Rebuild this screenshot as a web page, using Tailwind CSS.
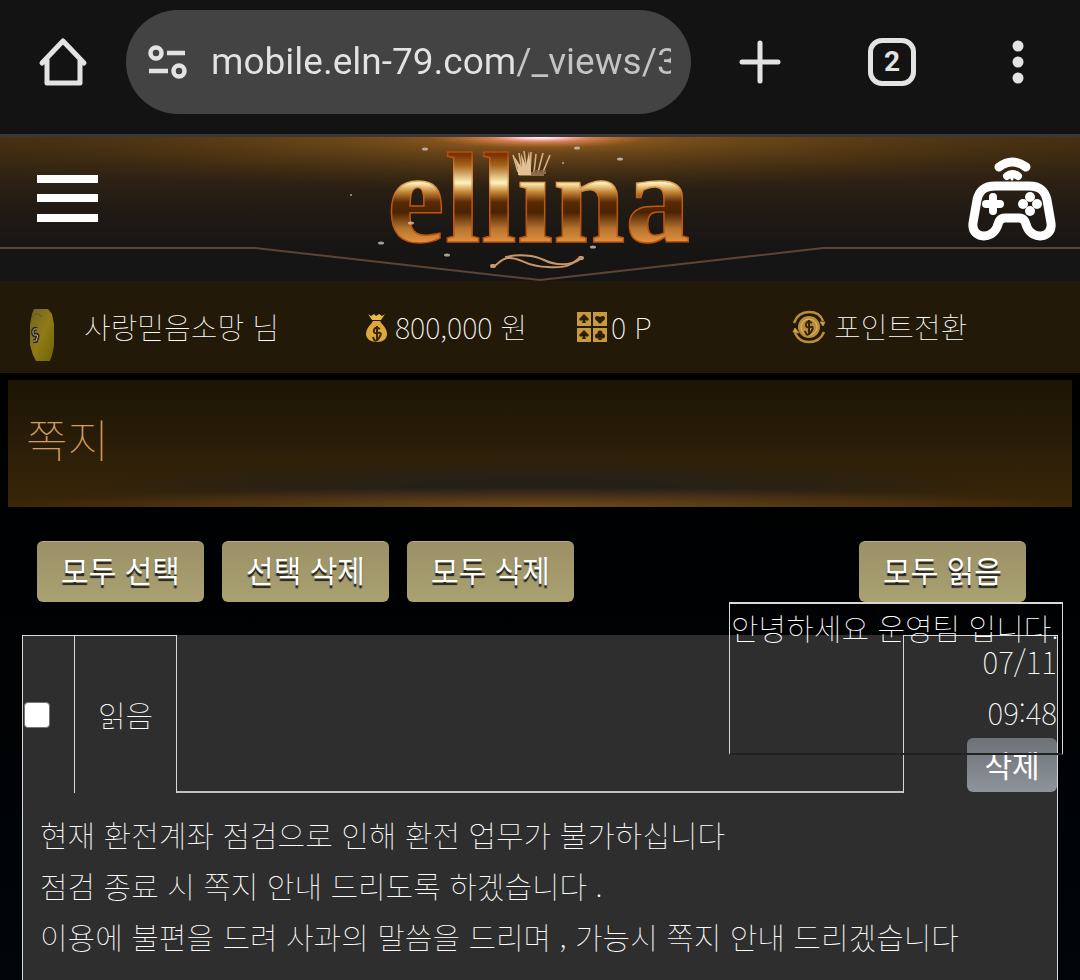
<!DOCTYPE html>
<html lang="ko">
<head>
<meta charset="utf-8">
<meta name="viewport" content="width=device-width, initial-scale=1">
<title>쪽지 - ellina</title>
<script src="https://cdn.jsdelivr.net/npm/@tailwindcss/browser@4"></script>
</head>
<body class="bg-black">
<div class="flex h-screen flex-col overflow-hidden bg-linear-to-b from-black to-[#00060a] font-['Noto_Sans_CJK_KR',sans-serif] font-thin text-white">

  <!-- Browser toolbar -->
  <div class="flex shrink-0 items-center border-b-3 border-[#38383b] bg-[#131313] pt-2.5 pb-5 pl-[38px] text-[#e3e3e3]">
    <button type="button" aria-label="홈" class="shrink-0">
      <svg class="h-[50px] w-[50px]" viewBox="0 0 50 50" fill="none" stroke="currentColor" stroke-width="5" stroke-linecap="round" stroke-linejoin="round"><path d="M4 26 25 4l21 22M9 23v23h33V23"/></svg>
    </button>
    <label class="ml-[38px] flex h-[104px] min-w-0 flex-1 items-center rounded-full bg-[#434343] pr-5 pl-[21px]">
      <svg class="h-9 w-10 shrink-0" viewBox="0 0 40 36" fill="none" stroke="currentColor" stroke-width="4.5"><circle cx="9" cy="9" r="5.500"/><path d="M20 9h18M2 27h19"/><circle cx="32" cy="27" r="5.500"/></svg>
      <input aria-label="주소" value="mobile.eln-79.com/_views/3" class="ml-6 w-full min-w-0 bg-linear-to-r from-[#e3e3e3] from-66% to-[#c4c4c4] to-66% bg-clip-text font-[Roboto,sans-serif] text-[37px] font-normal text-transparent outline-none">
    </label>
    <div class="flex w-[389px] shrink-0 items-center">
      <button type="button" aria-label="새 탭" class="ml-[46px]">
        <svg class="h-[46px] w-[46px]" viewBox="0 0 46 46" fill="none" stroke="currentColor" stroke-width="5" stroke-linecap="round"><path d="M23 4v38M5 23h36"/></svg>
      </button>
      <button type="button" aria-label="탭 2개" class="ml-[85px] flex h-12 w-12 items-center justify-center rounded-[14px] border-5 border-[#e3e3e3] font-[Roboto,sans-serif] text-[28px] font-bold">2</button>
      <button type="button" aria-label="메뉴" class="ml-[96px]">
        <svg class="h-11 w-3" viewBox="0 0 12 44" fill="currentColor"><circle cx="6" cy="6" r="5.5"/><circle cx="6" cy="22" r="5.5"/><circle cx="6" cy="38" r="5.5"/></svg>
      </button>
    </div>
  </div>

  <!-- Site header -->
  <header class="relative flex h-36 shrink-0 items-start justify-between overflow-hidden bg-[#161514] pr-[23px] pl-[37px]">
    <svg class="absolute inset-0 h-full w-full" viewBox="0 0 1080 144" preserveAspectRatio="none" aria-hidden="true">
      <defs>
        <radialGradient id="glow" cx="540" cy="0" r="620" gradientUnits="userSpaceOnUse" gradientTransform="scale(1 .09)">
          <stop offset="0" stop-color="#c07028" stop-opacity=".85"/><stop offset=".3" stop-color="#95601f" stop-opacity=".5"/><stop offset=".7" stop-color="#5f3c10" stop-opacity=".3"/><stop offset="1" stop-color="#3d280c" stop-opacity="0"/>
        </radialGradient>
        <radialGradient id="flare" cx="540" cy="0" r="110" gradientUnits="userSpaceOnUse" gradientTransform="scale(1 .1)">
          <stop offset="0" stop-color="#fff"/><stop offset=".2" stop-color="#f8c8d0"/><stop offset=".45" stop-color="#e58a64" stop-opacity=".8"/><stop offset="1" stop-color="#c0702a" stop-opacity="0"/>
        </radialGradient>
        <linearGradient id="warm" x2="0" y2="1"><stop offset="0" stop-color="#70480f" stop-opacity=".55"/><stop offset=".3" stop-color="#412b14" stop-opacity=".55"/><stop offset=".85" stop-color="#241c16" stop-opacity="0"/></linearGradient>
      </defs>
      <rect width="1080" height="144" fill="url(#warm)"/>
      <rect width="1080" height="144" fill="url(#glow)"/>
      <rect width="1080" height="144" fill="url(#flare)"/>
      <path d="M0 111H255L540 143 823 111h257v33H0z" fill="#151515" opacity=".6"/>
      <path d="M0 111H255L540 143 823 111h257" fill="none" stroke="#5d4434" stroke-width="2"/>
    </svg>
    <button type="button" aria-label="메뉴 열기" class="relative mt-9">
      <svg class="h-[52px] w-[61px]" viewBox="0 0 61 52" fill="#fff"><path d="M0 2h61v8H0zM0 21h61v8H0zM0 41h61v8H0z"/></svg>
    </button>
    <a href="#" aria-label="ellina" class="absolute inset-y-0 left-1/2 w-[400px] -translate-x-1/2">
      <svg class="h-36 w-[400px]" viewBox="0 0 400 144">
        <defs>
          <linearGradient id="gold" gradientUnits="userSpaceOnUse" x1="0" y1="18" x2="0" y2="105">
            <stop offset="0" stop-color="#7a3405"/><stop offset=".12" stop-color="#a8641c"/><stop offset=".32" stop-color="#fff3bd"/><stop offset=".42" stop-color="#c98b3c"/><stop offset=".54" stop-color="#5a2a04"/><stop offset=".66" stop-color="#4a2202"/><stop offset=".85" stop-color="#b87530"/><stop offset="1" stop-color="#e0913d"/>
          </linearGradient>
          <linearGradient id="rim" gradientUnits="userSpaceOnUse" x1="0" y1="18" x2="0" y2="105">
            <stop offset="0" stop-color="#b84b0c"/><stop offset=".3" stop-color="#e3b160"/><stop offset=".5" stop-color="#c2560f"/><stop offset="1" stop-color="#b9520f"/>
          </linearGradient>
          <mask id="dotless"><rect width="400" height="144" fill="#fff"/><path d="M172 0h42v38h-42z" fill="#000"/></mask>
        </defs>
        <text x="47" y="105" mask="url(#dotless)" class="font-['Liberation_Serif',serif] text-[130px] font-bold" fill="url(#gold)" stroke="url(#rim)" stroke-width="1.5">ellina</text>
        <g fill="none" stroke="#d9b083" stroke-width="1.6">
          <path d="M178 35 173 18M182 35l-3-19M187 35l-3-21M190 35l1-20M194 35l2-18M198 35l5-19M203 35l7-17"/>
          <path d="M178 36h28M179 38h25" stroke-width="1"/><path d="M194 34h12M194 36h12" stroke="#8b6748"/>
        </g>
        <path d="M178 32 174 19l8 12-1-15 5 13 3-15 2 18v6h-13z" fill="#e3c094"/>
        <g fill="none" stroke="#c9976a" stroke-width="2" stroke-linecap="round">
          <path d="M152 130c6-1 7-8 16-9 14-1 16 9 40 9 18 1 24-2 30-8"/>
          <path d="M166 120c12-3 28-2 38 3s26 7 38-2"/>
          <path d="M152 129h2M240 121h2" stroke-width="4"/>
        </g>
        <g fill="#d6d0c8" opacity=".75"><ellipse cx="85" cy="12" rx="3" ry="1.5"/><ellipse cx="237" cy="11" rx="3" ry="1.5"/><ellipse cx="280" cy="22" rx="3" ry="1.5"/><ellipse cx="71" cy="86" rx="3" ry="1.5"/><ellipse cx="41" cy="106" rx="3" ry="1.5"/><ellipse cx="107" cy="118" rx="3" ry="1.5"/><ellipse cx="253" cy="110" rx="3" ry="1.5"/><circle cx="11" cy="58" r="1"/><circle cx="223" cy="26" r="1"/></g>
      </svg>
    </a>
    <button type="button" aria-label="게임" class="relative mt-[18px]">
      <svg class="h-[88px] w-[90px]" viewBox="0 0 90 88" fill="none" stroke="#fff" stroke-linecap="round" stroke-linejoin="round">
        <path d="M32 12q13-10 27 0" stroke-width="9"/><path d="M40 21q5-4 11 0" stroke-width="8"/><path d="M45 20v4" stroke-width="3"/>
        <path d="M28 31h34c11 0 16 5 18 14l4 23c2 16-19 17-24 4-2-6-3-9-8-9H38c-5 0-6 3-8 9-5 13-26 12-24-4l4-23c2-9 7-14 18-14z" stroke-width="9"/>
        <path d="M26 42v14M19 49h14" stroke-width="8"/>
        <g fill="#fff" stroke="none"><circle cx="63" cy="42" r="5"/><circle cx="63" cy="56" r="5"/><circle cx="56" cy="49" r="5"/><circle cx="70" cy="49" r="5"/></g>
      </svg>
    </button>
  </header>

  <!-- Account strip -->
  <div class="grid h-[92px] shrink-0 grid-cols-[366fr_211fr_215fr_288fr] items-center bg-[#221908] text-[29px] whitespace-nowrap">
    <div class="flex items-center pl-7">
      <svg class="mt-4 h-[52px] w-7" viewBox="0 0 28 52"><defs><linearGradient id="chip" x2="1" y2="1"><stop offset="0" stop-color="#6f6227"/><stop offset=".5" stop-color="#907b16"/><stop offset="1" stop-color="#6d6207"/></linearGradient></defs><path d="M6 0h14l4 5 2 10v22l-2 9-2 6H8l-3-6-3-10V15L4 5z" fill="url(#chip)"/><path d="M4 8q4-7 10 0" stroke="#645718" fill="none"/><path d="M9 20q-4-1-4 3t3 3 0 6H5" fill="none" stroke="#2b291d" stroke-width="4"/><path d="M9 20q-4-1-4 3t3 3 0 6H5" fill="none" stroke="#b4af98"/></svg>
      <span class="ml-7">사랑믿음소망 님</span>
    </div>
    <div class="flex items-center gap-2">
      <svg class="h-[29px] w-[21px] shrink-0" viewBox="0 0 21 29"><path d="M2 1l3 2 3-2 2 2 3-2 3 2 3-2-4 6H6z" fill="#e9ba45"/><path d="M7 8h7l2 3c3 3 5 6 5 10 0 5-4 8-10 8S0 26 0 21c0-4 2-7 5-10z" fill="#dca83c"/><path d="M14 16q-5-3-6 1t4 3 1 5-6-1M11 13v14" fill="none" stroke="#392609" stroke-width="2"/></svg>
      <span>800,000 원</span>
    </div>
    <div class="flex items-center gap-1">
      <svg class="h-[30px] w-[30px] shrink-0" viewBox="0 0 30 30"><g fill="#c99a3a"><path d="M0 0h14v14H0zM16 0h14v14H16zM0 16h14v14H0zM16 16h14v14H16z"/></g><g fill="#2d1e08"><path d="M7 2l5 5q-1 3-4 1l1 3H5l1-3q-3 2-4-1zM23 12l-5-5q0-5 5-2 5-3 5 2zM7 18l5 5q-1 3-4 1l1 3H5l1-3q-3 2-4-1z"/><circle cx="23" cy="21" r="2.500"/><circle cx="20.500" cy="24" r="2.500"/><circle cx="25.500" cy="24" r="2.500"/><path d="M23 22l2 6h-4z"/></g></svg>
      <span>0 P</span>
    </div>
    <div>
      <a href="#" class="flex items-center gap-2">
        <svg class="h-[34px] w-[34px] shrink-0" viewBox="0 0 34 34" fill="none" stroke="#b98e3a" stroke-width="2.500"><circle cx="17" cy="17" r="11" fill="#b98e3a" stroke="none"/><circle cx="17" cy="17" r="8" stroke="#e0ba62" stroke-width="1"/><path d="M2 13Q6 2 17 2q11 0 14 9M32 22q-4 10-15 10Q7 32 3 23"/><path d="M28 12h5l-2 4zM1 22l2-4 4 5z" fill="#d6a641" stroke-width="1"/><path d="M20 13q-5-3-6 1t4 3 1 5-6-1M17 10v14" stroke="#35240b" stroke-width="2"/></svg>
        <span>포인트전환</span>
      </a>
    </div>
  </div>

  <!-- Page title -->
  <div class="relative mx-2 mt-[7px] flex h-[127px] shrink-0 items-center overflow-hidden bg-linear-to-b from-[#1c1405] via-[#2a1d08] to-[#3a2608] px-[18px] pb-2.5">
    <div class="absolute inset-x-[6%] -bottom-2 h-14 bg-radial from-[#252017] from-20% to-transparent to-70%"></div>
    <div class="absolute inset-x-0 bottom-0 h-5 bg-[radial-gradient(ellipse_at_bottom,#70481c,transparent_70%)]"></div>
    <h1 class="relative text-[45px] leading-none text-[#d0a060]">쪽지</h1>
  </div>

  <!-- Bulk actions -->
  <div class="mt-[34px] flex shrink-0 gap-[18px] pr-[54px] pl-[37px] text-[30px] leading-none font-normal">
    <button type="button" class="h-[61px] w-[167px] rounded-md border-t border-[#b5ad83] bg-linear-to-b from-[#9b9066] to-[#aaa272] pb-1.5 text-shadow-[0_3px_1px_#222]">모두 선택</button>
    <button type="button" class="h-[61px] w-[167px] rounded-md border-t border-[#b5ad83] bg-linear-to-b from-[#9b9066] to-[#aaa272] pb-1.5 text-shadow-[0_3px_1px_#222]">선택 삭제</button>
    <button type="button" class="h-[61px] w-[167px] rounded-md border-t border-[#b5ad83] bg-linear-to-b from-[#9b9066] to-[#aaa272] pb-1.5 text-shadow-[0_3px_1px_#222]">모두 삭제</button>
    <button type="button" class="ml-auto h-[61px] w-[167px] rounded-md border-t border-[#b5ad83] bg-linear-to-b from-[#9b9066] to-[#aaa272] pb-1.5 text-shadow-[0_3px_1px_#222]">모두 읽음</button>
  </div>

  <!-- Message list -->
  <div class="relative mt-[33px] mr-[22px] ml-[22px] flex-1">
    <table class="h-full w-full table-fixed border-separate border-spacing-0 bg-[#2e2e2e] text-[30px] leading-[51px]">
      <colgroup><col class="w-[5%]"><col class="w-[10%]"><col class="w-[70%]"><col class="w-[15%]"></colgroup>
      <tbody>
        <tr class="h-[158px]">
          <td class="border-t border-l border-[#d8d8d8] p-0 align-middle"><input type="checkbox" aria-label="쪽지 선택" class="ml-px block h-[26px] w-[26px] appearance-none rounded-[4px] border border-[#767676] bg-white checked:bg-blue-500"></td>
          <td class="border border-b-0 border-[#d8d8d8] p-0 text-center">읽음</td>
          <td class="border-b-2 border-[#c0c0c0] p-0"></td>
          <td class="border border-b-0 border-[#d8d8d8] p-0 text-right align-top">07/11<br>09:48<button type="button" class="ml-auto block h-[54px] w-[90px] rounded-[6px] bg-linear-to-b from-[#6d7178] to-[#8f939a] pb-0.5 text-[30px] leading-none font-normal">삭제</button></td>
        </tr>
        <tr>
          <td colspan="4" class="border-x border-[#d8d8d8] px-[17px] pt-4 align-top">
            <p>현재 환전계좌 점검으로 인해 환전 업무가 불가하십니다</p>
            <p>점검 종료 시 쪽지 안내 드리도록 하겠습니다 .</p>
            <p>이용에 불편을 드려 사과의 말씀을 드리며 , 가능시 쪽지 안내 드리겠습니다</p>
          </td>
        </tr>
      </tbody>
    </table>
    <div class="pointer-events-none absolute -top-[33px] -right-[5px] h-[153px] w-[334px] border border-t-2 border-b-2 border-[#d8d8d8] border-b-[#222] pl-px text-[30px] leading-[46px] whitespace-nowrap">안녕하세요 운영팀 입니다.</div>
  </div>
</div>
</body>
</html>
